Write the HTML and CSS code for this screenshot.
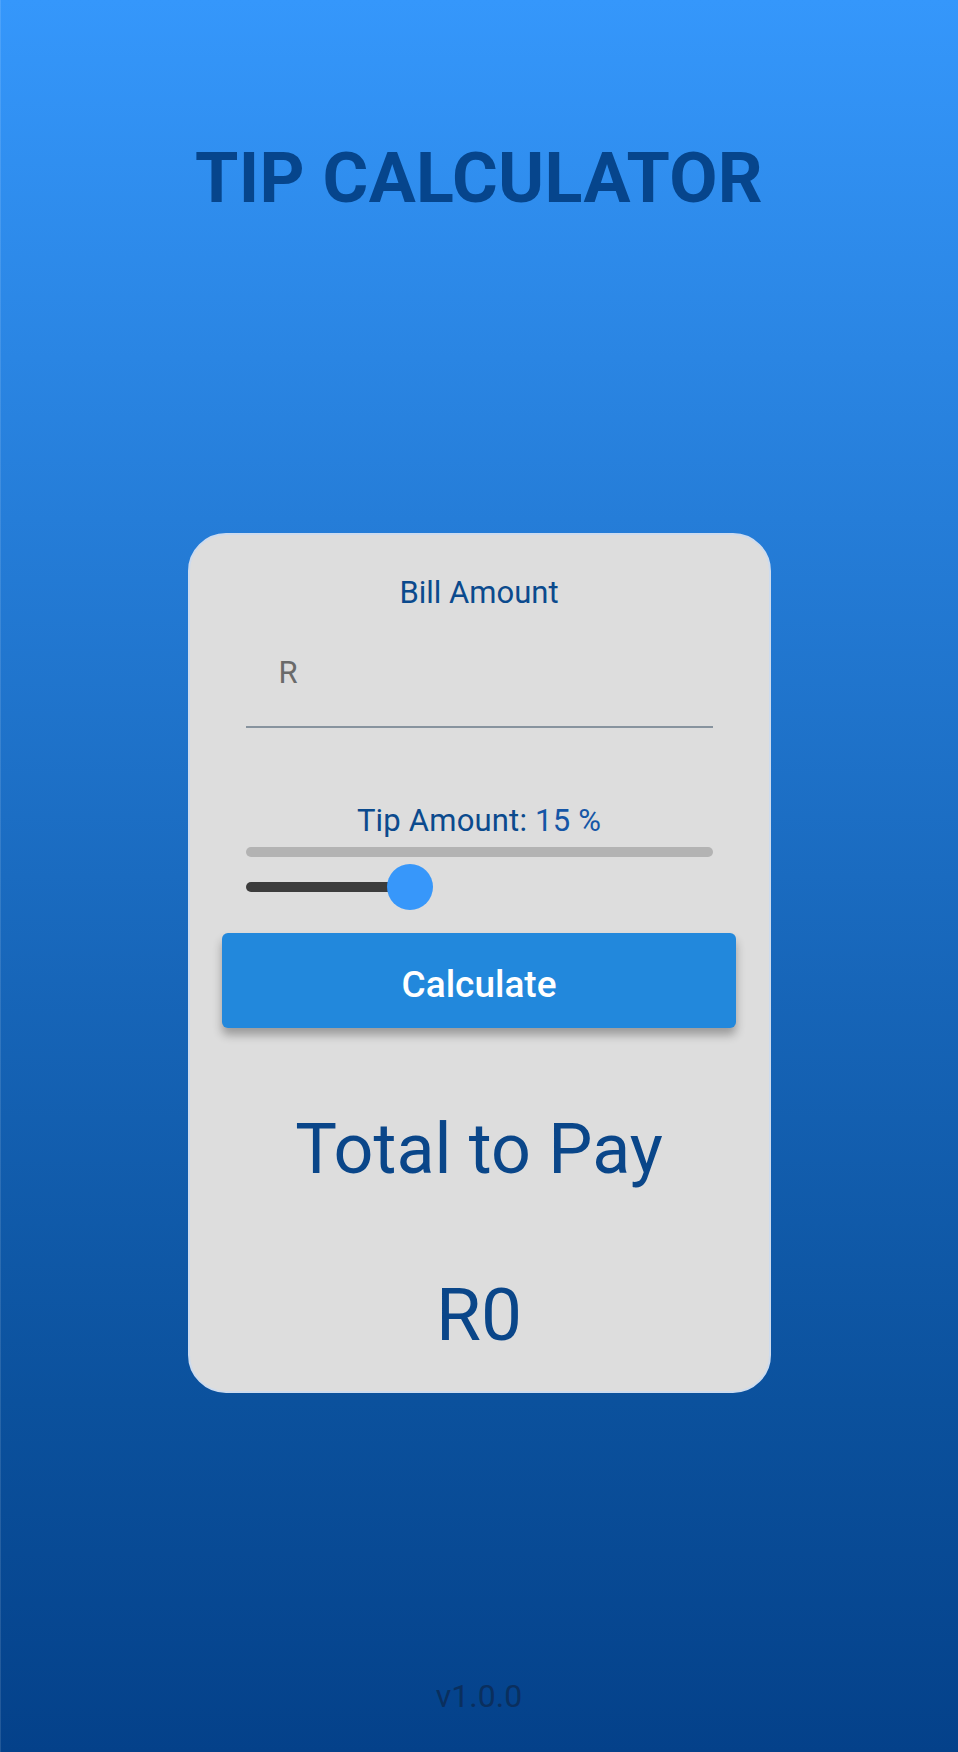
FILE: index.html
```html
<!DOCTYPE html>
<html lang="en">
<head>
<meta charset="utf-8">
<title>Tip Calculator</title>
<link rel="stylesheet" href="styles.css">
</head>
<body>
<main class="page">
  <h1 class="title">TIP CALCULATOR</h1>
  <section class="card">
    <label class="label" for="bill">Bill Amount</label>
    <input class="field" id="bill" type="text" placeholder="R">
    <div class="label tip-label">Tip Amount: <span class="tip-value">15 %</span></div>
    <div class="progress"></div>
    <div class="slider">
      <div class="slider-fill"></div>
      <div class="slider-thumb"></div>
    </div>
    <button class="calc" type="button">Calculate</button>
    <div class="total-label">Total to Pay</div>
    <div class="total-value">R0</div>
  </section>
  <footer class="version">v1.0.0</footer>
</main>
</body>
</html>
```

FILE: styles.css
```css
html, body {
  margin: 0;
  padding: 0;
}

body {
  font-family: Roboto, "Liberation Sans", sans-serif;
}

.page {
  box-sizing: border-box;
  min-height: 1752px;
  display: flex;
  flex-direction: column;
  align-items: center;
  padding-top: 138px;
  padding-bottom: 37px;
  background: linear-gradient(180deg, #3597fb 0%, #1a6bc0 50%, #0b519d 80%, #04418a 100%);
  box-shadow: inset 1px 0 0 rgba(255, 255, 255, 0.12);
}

.title {
  margin: 0;
  font-size: 70px;
  line-height: 80px;
  font-weight: 700;
  letter-spacing: 0.3px;
  color: #06458c;
}

.card {
  box-sizing: border-box;
  width: 583px;
  margin-top: 315px;
  padding: 40px 33px 34px;
  display: flex;
  flex-direction: column;
  align-items: center;
  background: #dddddd;
  border: 2px solid #cddbee;
  border-radius: 38px;
}

.label {
  display: block;
  font-size: 31px;
  line-height: 36px;
  color: #0b4a8d;
  text-align: center;
}

.field {
  box-sizing: border-box;
  width: 467px;
  height: 117px;
  padding: 43px 0 36px 33px;
  margin: 0;
  border: none;
  border-bottom: 2px solid #87939e;
  background: transparent;
  font-family: Roboto, "Liberation Sans", sans-serif;
  font-size: 31px;
  line-height: 36px;
  color: #333;
  outline: none;
}

.field::placeholder {
  color: #6a6a6a;
}

.tip-label {
  margin-top: 75px;
  letter-spacing: 0.2px;
}

.tip-value {
  color: #1556a6;
}

.progress {
  width: 467px;
  height: 10px;
  margin-top: 8px;
  border-radius: 5px;
  background: #b3b3b3;
}

.slider {
  width: 467px;
  height: 46px;
  margin-top: 7px;
  display: flex;
  align-items: center;
}

.slider-fill {
  width: 164px;
  height: 10px;
  border-radius: 5px;
  background: #3c3c3c;
}

.slider-thumb {
  width: 46px;
  height: 46px;
  margin-left: -23px;
  border-radius: 50%;
  background: #3797fa;
}

.calc {
  box-sizing: border-box;
  width: 514px;
  height: 95px;
  margin-top: 23px;
  padding: 7px 0 0;
  border: none;
  border-radius: 6px;
  background: #2288dc;
  color: #ffffff;
  font-family: Roboto, "Liberation Sans", sans-serif;
  font-size: 37px;
  font-weight: 500;
  box-shadow: 0 7px 10px rgba(0, 0, 0, 0.3);
}

.total-label,
.total-value {
  font-size: 70px;
  line-height: 84px;
  color: #0a4689;
  text-align: center;
}

.total-label {
  margin-top: 79px;
}

.total-value {
  margin-top: 82px;
  font-size: 73px;
}

.version {
  margin-top: auto;
  font-size: 32px;
  line-height: 38px;
  color: #0a2f5e;
}
```
